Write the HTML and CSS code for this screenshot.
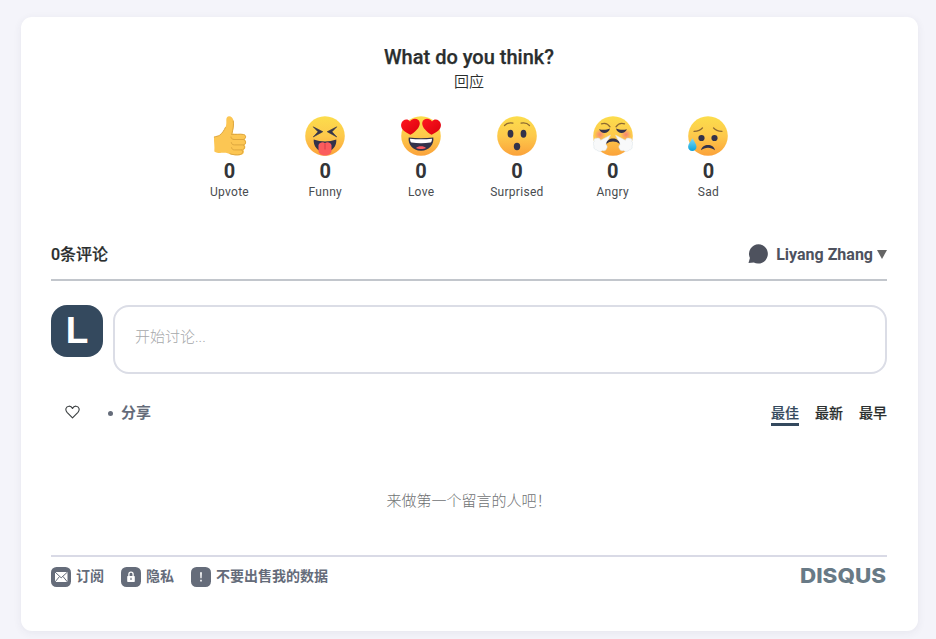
FILE: index.html
```html
<!DOCTYPE html>
<html lang="zh-CN">
<head>
<meta charset="utf-8">
<title>Disqus</title>
<link rel="stylesheet" href="styles.css">
</head>
<body>
<svg class="defs" width="0" height="0" aria-hidden="true">
  <defs>
    <linearGradient id="face" x1="0" y1="0" x2="0" y2="1">
      <stop offset="0" stop-color="#fcdd4c"/><stop offset=".5" stop-color="#fdc94b"/><stop offset="1" stop-color="#fba23a"/>
    </linearGradient>
    <linearGradient id="heart" x1="0" y1="0" x2="1" y2="1">
      <stop offset="0" stop-color="#ff1620"/><stop offset="1" stop-color="#d9000c"/>
    </linearGradient>
    <linearGradient id="tear" x1="0" y1="0" x2="0" y2="1">
      <stop offset="0" stop-color="#7fdbf5"/><stop offset="1" stop-color="#0aa3dc"/>
    </linearGradient>
    <radialGradient id="blush"><stop offset="0" stop-color="#f4717f" stop-opacity=".8"/><stop offset="1" stop-color="#f4717f" stop-opacity="0"/></radialGradient>
  </defs>
</svg>
<main class="card">
  <section class="reactions">
    <h1 class="reactions-title">What do you think?</h1>
    <p class="reactions-sub">回应</p>
    <ul class="reaction-list">
      <li class="reaction">
        <svg class="emoji" viewBox="0 0 40 40">
          <path fill="#fcc653" d="M4 21c2-.8 3.900-.6 5.500-1.700 2.700-2 4.500-4.700 5.900-7.800 1.100-2.500 1-5 .9-7.500C16.200 1.500 17.400.2 19.100.2c2.200 0 4 2 4.500 4.800.7 4.100-.3 8-1.300 12.400 3.600.7 7.800.1 11.200.8 2.700.5 3.200 3.800 1.100 5.200 2.200 1.300 2 4.500-.2 5.500 1.600 1.400 1.100 4.200-1 5 1.300 1.500.3 4.200-2 4.900-3.100 1-7.700.6-10.600-.5-3.100-1.100-4.600-1.900-8.800-1.500-3 .3-5.400-.1-7.700-1.400C4.900 30.600 3.700 26 4 21z"/>
          <g fill="none" stroke="#dda63f" stroke-width="1" stroke-linecap="round">
            <path d="M4.300 21c2-.8 3.600-.6 5.200-1.700 2.700-2 4.500-4.700 5.900-7.800"/>
            <path d="M23.300 5c.7 4.100-.3 8-1.300 12.400M21.500 18.400c3.800.5 8.600-.8 12 .1 2.700.6 3 4-.2 5H24M24.500 23.500c-2.600 0-3.400-1-3.500-2.500M33.600 23.600c2.700 1 2.600 4.500 0 5.300H24.500c-2 0-3-.9-3.200-2.300M33.500 29c1.800 1.200 1.200 4.100-1 4.900h-8c-1.800 0-2.700-.8-2.900-2.200M31.900 34c1.500 1.500.6 4-1.600 4.500-3.300.8-7.700.3-10.300-.7"/>
          </g>
        </svg>
        <strong class="count">0</strong><span class="label">Upvote</span>
      </li>
      <li class="reaction">
        <svg class="emoji" viewBox="0 0 40 40">
          <circle cx="20" cy="20" r="19.800" fill="url(#face)"/>
          <path fill="#38364a" stroke="#38364a" stroke-width=".6" stroke-linejoin="round" d="M8.200 10.800l9.600 4.900-9.600 5.300 4.800-5.200zM31.800 10.800l-9.600 4.900 9.600 5.300-4.800-5.200z"/>
          <path fill="#33324a" d="M8.700 23.500c7 2.500 15.600 2.500 22.600 0 .6 6.300-3.800 12.500-11.300 12.500S8.100 29.800 8.700 23.500z"/>
          <path fill="#fb5c5d" d="M13.500 29c1-2.500 4.500-3.500 6.500-1.800 2-1.700 5.500-.7 6.500 1.800v5.500c0 3.200-3 5.100-6.500 5.100s-6.500-1.900-6.500-5.100z"/>
          <path d="M20 27.500v6" stroke="#d93b47" stroke-width="1"/>
        </svg>
        <strong class="count">0</strong><span class="label">Funny</span>
      </li>
      <li class="reaction">
        <svg class="emoji" viewBox="0 0 40 40">
          <circle cx="20" cy="20" r="19.800" fill="url(#face)"/>
          <path fill="url(#heart)" d="M9.400 18.800C3.800 16 -.8 12.800.2 7.900 1.200 3.200 6.800 2 9 5.500c2.500-4 9-3.300 9.700 1 .7 4.500-4 9-9.300 12.300z"/>
          <path fill="url(#heart)" d="M30.600 18.800c5.600-2.800 10.200-6 9.200-10.900-1-4.700-6.600-5.900-8.800-2.400-2.500-4-9-3.300-9.700 1-.7 4.500 4 9 9.300 12.300z"/>
          <path fill="#33324a" d="M7.700 21.500c8 .9 16.600.9 24.600 0 1 6.500-3.900 13.200-12.300 13.200S6.700 28 7.700 21.500z"/>
          <path fill="#fff" d="M9 22.700c7 .8 15 .8 22 0-.1 2-.5 3.700-1.600 3.900-6 .8-12.800.8-18.800 0C9.500 26.400 9.100 24.700 9 22.700z"/>
          <path fill="#fb5961" d="M15 32c2-2.400 8-2.400 10 0-2.700 1.300-7.300 1.300-10 0z"/>
        </svg>
        <strong class="count">0</strong><span class="label">Love</span>
      </li>
      <li class="reaction">
        <svg class="emoji" viewBox="0 0 40 40">
          <circle cx="20" cy="20" r="19.800" fill="url(#face)"/>
          <path fill="none" stroke="#8d6932" stroke-width="1.200" stroke-linecap="round" d="M7.500 9.500c2-2.200 5-3 8.500-2.300M32.500 9.500c-2-2.200-5-3-8.500-2.300"/>
          <g fill="#33324a"><ellipse cx="13.500" cy="17.700" rx="2.900" ry="4"/><ellipse cx="26.500" cy="17.700" rx="2.900" ry="4"/><ellipse cx="20" cy="30.500" rx="3.200" ry="3.700"/></g>
        </svg>
        <strong class="count">0</strong><span class="label">Surprised</span>
      </li>
      <li class="reaction">
        <svg class="emoji" viewBox="0 0 40 40">
          <circle cx="20" cy="20" r="19.800" fill="url(#face)"/>
          <circle cx="7" cy="18.500" r="5.500" fill="url(#blush)"/><circle cx="33" cy="18.500" r="5.500" fill="url(#blush)"/>
          <path fill="none" stroke="#8d6932" stroke-width="1.300" stroke-linecap="round" d="M8.500 7.800c3-1 6.500 0 8.500 3M31.500 7.800c-3-1-6.500 0-8.500 3"/>
          <path fill="#33324a" d="M6 13.300c3.900 1 7.800.6 11-.8-1.200 5.300-8.700 6.200-11 .8zM34 13.300c-3.900 1-7.800.6-11-.8 1.200 5.300 8.700 6.200 11 .8z"/>
          <g fill="#f8f9fa" stroke="#d7e1e6" stroke-width=".5">
            <path d="M17.500 19l-4.700 9.500c1.600 1 1.800 3 .5 4.600-.4 1.700-2.300 2-3.900 1.300-1.400 1.500-4.400 1.300-5.600-.4-2.200 0-3.500-2.100-2.800-4.100-1.300-1.800-.7-3.800.2-4.600-1-2 .6-3.600 2.700-3 1.700-.7 3.200.2 3.700 2z"/>
            <path d="M22.500 19l4.700 9.500c-1.600 1-1.800 3-.5 4.600.4 1.700 2.300 2 3.900 1.300 1.400 1.500 4.400 1.300 5.600-.4 2.200 0 3.500-2.100 2.800-4.100 1.300-1.800.7-3.800-.2-4.600 1-2-.6-3.600-2.700-3-1.700-.7-3.200.2-3.700 2z"/>
          </g>
          <path fill="#33324a" d="M13.200 28c.8-7.400 12.800-7.400 13.600 0-3.800-3.300-9.800-3.300-13.600 0z"/>
        </svg>
        <strong class="count">0</strong><span class="label">Angry</span>
      </li>
      <li class="reaction">
        <svg class="emoji" viewBox="0 0 40 40">
          <circle cx="20" cy="20" r="19.800" fill="url(#face)"/>
          <path fill="none" stroke="#8d6932" stroke-width="1.300" stroke-linecap="round" d="M6 15.300c3.700 0 6.700-1 8.500-3.400M34 15.300c-3.700 0-6.700-1-8.500-3.400"/>
          <circle cx="13.500" cy="22" r="3.100" fill="#33324a"/><circle cx="26.500" cy="22" r="3.100" fill="#33324a"/>
          <path fill="#33324a" d="M13 34.200c1.200-6.900 12.800-6.900 14 0-3.800-3.400-10.200-3.400-14 0z"/>
          <path fill="url(#tear)" d="M4.300 22.300c1.900 3.200 4.200 5.800 4.200 8.400 0 2.500-1.800 4.200-4.200 4.200S.1 33.200.1 30.700c0-2.600 2.600-5 4.200-8.400z"/>
        </svg>
        <strong class="count">0</strong><span class="label">Sad</span>
      </li>
    </ul>
  </section>

  <header class="thread-head">
    <span class="comment-total">0条评论</span>
    <span class="user">
      <svg class="bubble" viewBox="0 0 20 20"><path fill="#4e525e" d="M10.500.2a9.600 9.700 0 1 1-4.700 18.300L.5 19l1.400-5A9.600 9.700 0 0 1 10.500.2z"/></svg>
      <span class="user-name">Liyang Zhang</span>
      <span class="caret"></span>
    </span>
  </header>

  <div class="composer">
    <div class="avatar">L</div>
    <div class="editor">开始讨论...</div>
  </div>

  <nav class="thread-nav">
    <svg class="like" viewBox="0 0 16 14"><path fill="none" stroke="#3c4042" stroke-width="1.200" stroke-linejoin="round" d="M8 13.200L2.200 7.300C-.2 4.600 1 1 4.200.8 6 .7 7.300 1.700 8 3.200 8.700 1.700 10 .7 11.800.8c3.200.2 4.400 3.800 2 6.500z"/></svg>
    <span class="dot"></span>
    <span class="share">分享</span>
    <div class="sorts"><span class="sort active">最佳</span><span class="sort">最新</span><span class="sort">最早</span></div>
  </nav>

  <p class="empty">来做第一个留言的人吧！</p>

  <footer class="footer">
    <span class="foot-link">
      <svg class="foot-icon" viewBox="0 0 20 20"><rect width="20" height="20" rx="5.500" fill="#656c7a"/><path fill="#fff" d="M4 5h12.500v10H4z"/><path fill="none" stroke="#656c7a" stroke-width="1" d="M4 5l6.200 5.800L16.500 5M4 15l4.500-5.500M16.500 15l-4.500-5.500"/></svg>
      <span class="foot-text">订阅</span></span>
    <span class="foot-link">
      <svg class="foot-icon" viewBox="0 0 20 20"><rect width="20" height="20" rx="5.500" fill="#656c7a"/><rect x="6.200" y="9" width="7.600" height="6" rx=".7" fill="#fff"/><path fill="none" stroke="#fff" stroke-width="1.300" d="M7.900 9V7.300a2.100 2.100 0 0 1 4.200 0V9"/><path stroke="#656c7a" stroke-width="1.100" d="M10 10.800v2.200"/></svg>
      <span class="foot-text">隐私</span></span>
    <span class="foot-link">
      <svg class="foot-icon" viewBox="0 0 20 20"><rect width="20" height="20" rx="5.500" fill="#656c7a"/><path fill="#fff" d="M9.100 5.200h1.800l-.3 6H9.400zM9.200 12.800h1.600v1.600H9.200z"/></svg>
      <span class="foot-text">不要出售我的数据</span></span>
    <svg class="brand" width="87" height="26"><text x="0" y="16" textLength="86" lengthAdjust="spacingAndGlyphs">DISQUS</text></svg>
  </footer>
</main>
</body>
</html>
```
FILE: styles.css
```css
* { box-sizing: border-box; }
body {
  margin: 0;
  padding: 17px 18px 8px 21px;
  height: 639px;
  overflow: hidden;
  background: #f4f4fa;
  color: #2a2e2e;
  font-family: Roboto, "Noto Sans CJK SC", sans-serif;
}
.defs { position: absolute; }
.card {
  height: 614px;
  padding: 28px 31px 0 30px;
  background: #fff;
  border-radius: 11px;
  box-shadow: 0 2px 8px rgba(60, 60, 90, .07);
}
.reactions { height: 202px; text-align: center; }
.reactions-title { margin: 0; font-size: 20px; line-height: 24px; font-weight: 500; -webkit-text-stroke: .25px #2a2e2e; }
.reactions-sub { margin: 0; padding-top: 2px; font-size: 15px; line-height: 22px; font-weight: 350; }
.reaction-list {
  display: flex;
  justify-content: center;
  margin: 23px 0 0;
  padding: 0;
  list-style: none;
}
.reaction { display: flex; flex-direction: column; align-items: center; width: 95.8px; }
.emoji { width: 40px; height: 40px; }
.count { margin-top: 3px; font-size: 20px; line-height: 24px; font-weight: 700; color: #333538; }
.label { font-size: 12px; line-height: 18px; letter-spacing: .28px; color: #494c4f; }

.thread-head {
  display: flex;
  justify-content: space-between;
  align-items: center;
  height: 34px;
  margin-bottom: 24px;
  border-bottom: 2px solid #c2c6cc;
}
.comment-total { margin-top: -20px; font-size: 16px; font-weight: 500; -webkit-text-stroke: .2px #2a2e2e; }
.user { display: flex; align-items: center; margin-top: -18px; color: #4e525e; font-size: 16px; font-weight: 700; }
.bubble { width: 20px; height: 20px; margin-right: 8px; }
.caret { margin-left: 4px; border: 5px solid transparent; border-top: 9px solid #656565; border-bottom: 0; }

.composer { display: flex; gap: 10px; }
.avatar {
  width: 52px;
  height: 52px;
  border-radius: 16px;
  background: #34495e;
  color: #fff;
  font: 700 37px/51px "Liberation Sans", sans-serif;
  text-align: center;
}
.editor {
  flex: 1;
  height: 69px;
  padding: 19px 20px;
  border: 2px solid #dbdde6;
  border-radius: 16px;
  color: #a6a8aa;
  font-size: 15px;
  line-height: 22px;
  font-weight: 300;
}

.thread-nav { display: flex; align-items: center; height: 32px; margin-top: 23px; padding-left: 14px; }
.like { width: 15px; height: 14px; margin-top: -2px; }
.dot { width: 5px; height: 5px; margin-left: 28px; border-radius: 50%; background: #656c7a; }
.share { margin: -3px 0 0 8px; color: #656c7a; font-size: 15px; font-weight: 700; }
.sorts { display: flex; gap: 16px; margin: 2px 0 0 auto; font-size: 14px; font-weight: 500; line-height: 20px; -webkit-text-stroke: .2px currentColor; }
.sort { height: 23px; border-bottom: 3px solid transparent; }
.active { color: #34495e; border-color: #34495e; }
.empty { margin: 60px 0 42px; color: #707274; text-align: center; font-size: 15px; line-height: 24px; font-weight: 300; }

.footer { display: flex; align-items: flex-start; gap: 17px; padding-top: 10px; border-top: 2px solid #d9dae6; }
.foot-link { display: flex; align-items: center; gap: 5px; height: 20px; color: #656c7a; font-size: 14px; font-weight: 700; }
.foot-text { margin-top: -5px; }
.foot-icon { width: 20px; height: 20px; }
.brand { margin-left: auto; overflow: visible; }
.brand text { font: 800 20px Inter, sans-serif; fill: #687a86; }
```
